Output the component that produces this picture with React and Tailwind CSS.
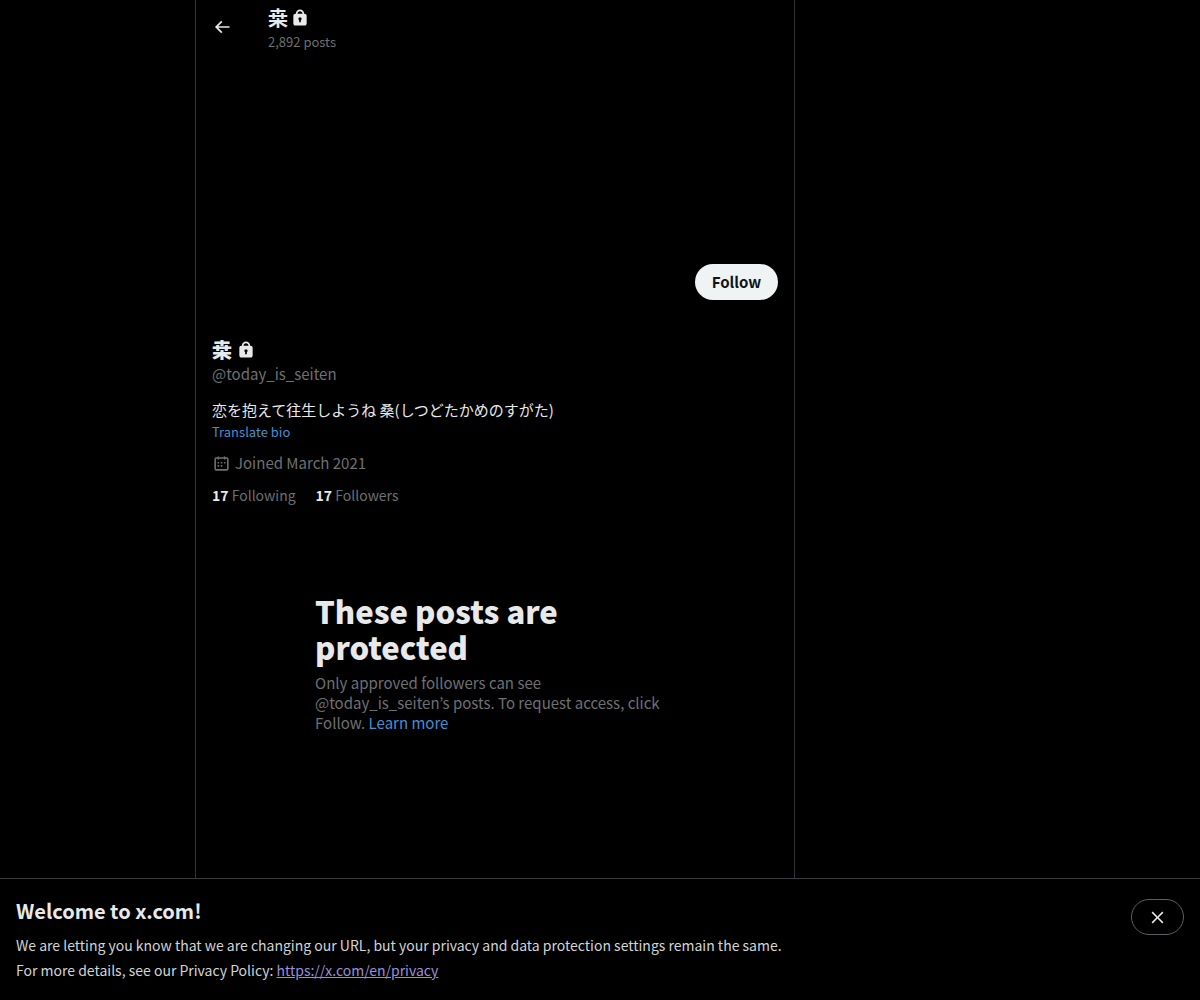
const lockPath =
  'M17.5 7H17v-.25c0-2.76-2.24-5-5-5s-5 2.24-5 5V7h-.5C5.12 7 4 8.12 4 9.5v9C4 19.88 5.12 21 6.5 21h11c1.38 0 2.5-1.12 2.5-2.5v-9C20 8.12 18.88 7 17.5 7zM13 14.73V17h-2v-2.27c-.59-.34-1-.99-1-1.73 0-1.1.9-2 2-2 1.11 0 2 .9 2 2 0 .74-.4 1.39-1 1.73zM15 7H9v-.25c0-1.66 1.35-3 3-3 1.66 0 3 1.34 3 3V7z';
const backPath =
  'M7.414 13l5.043 5.04-1.414 1.42L3.586 12l7.457-7.46 1.414 1.42L7.414 11H21v2H7.414z';
const calendarPath =
  'M7 4V3h2v1h6V3h2v1h1.5C19.89 4 21 5.12 21 6.5v12c0 1.38-1.11 2.5-2.5 2.5h-13C4.12 21 3 19.88 3 18.5v-12C3 5.12 4.12 4 5.5 4H7zm0 2H5.5c-.27 0-.5.22-.5.5v12c0 .28.23.5.5.5h13c.28 0 .5-.22.5-.5v-12c0-.28-.22-.5-.5-.5H17v1h-2V6H9v1H7V6zm0 6h2v-2H7v2zm0 4h2v-2H7v2zm4-4h2v-2h-2v2zm0 4h2v-2h-2v2zm4-4h2v-2h-2v2z';
const closePath =
  'M10.59 12L4.54 5.96l1.42-1.42L12 10.59l6.04-6.05 1.42 1.42L13.41 12l6.05 6.04-1.42 1.42L12 13.41l-6.04 6.05-1.42-1.42L10.59 12z';

function Icon({ path, className, label }) {
  return (
    <svg
      viewBox="0 0 24 24"
      fill="currentColor"
      className={className}
      role={label ? 'img' : undefined}
      aria-label={label}
      aria-hidden={label ? undefined : true}
    >
      <path d={path} />
    </svg>
  );
}

function TopBar() {
  return (
    <header className="flex h-[53px] items-center px-4">
      <div className="w-14">
        <button type="button" aria-label="Back" className="block">
          <Icon path={backPath} className="size-5" />
        </button>
      </div>
      <div className="pt-1.5">
        <h2 lang="ja" className="flex items-center gap-0.5 text-xl leading-6 font-bold">
          桒
          <Icon path={lockPath} className="size-5" label="Protected account" />
        </h2>
        <p className="text-[13px] leading-6 text-[#6e7072]">2,892 posts</p>
      </div>
    </header>
  );
}

function Profile() {
  return (
    <section className="px-4 pt-3">
      <div className="flex h-[74px] items-start justify-end">
        <button
          type="button"
          className="h-9 min-w-[83px] rounded-full bg-[#eff3f4] px-4 text-[15px] font-bold text-[#0f1419]"
        >
          Follow
        </button>
      </div>
      <h1 lang="ja" className="flex items-center gap-1 text-xl leading-6 font-extrabold">
        桒
        <Icon path={lockPath} className="size-5" label="Protected account" />
      </h1>
      <p className="text-[15px] leading-6 text-[#6e7072]">@today_is_seiten</p>
      <p className="mt-3 text-[15px] leading-6" lang="ja">
        恋を抱えて往生しようね 桑(しつどたかめのすがた)
      </p>
      <button type="button" className="block text-[13px] leading-5 text-[#4590d5]">
        Translate bio
      </button>
      <p className="mt-[11px] flex items-center gap-1 text-[15px] leading-5 text-[#6e7072]">
        <Icon path={calendarPath} className="size-[19px]" />
        Joined March 2021
      </p>
      <div className="mt-3 flex gap-5 text-sm leading-5 text-[#6e7072]">
        <a href="#following">
          <span className="font-bold text-[#e7e9ea]">17</span> Following
        </a>
        <a href="#followers">
          <span className="font-bold text-[#e7e9ea]">17</span> Followers
        </a>
      </div>
    </section>
  );
}

function ProtectedNotice() {
  return (
    <section className="mx-auto mt-22 mb-8 w-full max-w-[360px]">
      <h2 className="text-[31px] leading-9 font-extrabold">These posts are protected</h2>
      <p className="mt-2 text-[15px] leading-5 text-[#6e7072]">
        Only approved followers can see @today_is_seiten’s posts. To request access, click Follow.{' '}
        <a href="#learn-more" className="text-[#4590d5]">
          Learn more
        </a>
      </p>
    </section>
  );
}

function WelcomeBanner() {
  return (
    <aside className="sticky bottom-0 flex items-start justify-between gap-4 border-t border-[#3a3d40] bg-black px-4 pt-5 pb-[17px]">
      <div>
        <h2 className="text-xl leading-6 font-bold">Welcome to x.com!</h2>
        <p className="mt-2.5 text-sm leading-[25px] text-[#d2d4d5]">
          We are letting you know that we are changing our URL, but your privacy and data protection
          settings remain the same.
          <br />
          For more details, see our Privacy Policy:{' '}
          <a href="https://x.com/en/privacy" className="text-[#9a8fd8] underline">
            https://x.com/en/privacy
          </a>
        </p>
      </div>
      <button
        type="button"
        aria-label="Close"
        className="flex h-9 shrink-0 items-center rounded-full border border-[#5a6065] px-4"
      >
        <Icon path={closePath} className="size-[19px]" />
      </button>
    </aside>
  );
}

export default function App() {
  return (
    <div className="flex min-h-screen flex-col bg-black font-['Noto_Sans_CJK_JP',sans-serif] text-[#e7e9ea]">
      <div className="flex grow justify-center lg:pr-[210px]">
        <main className="w-full max-w-[600px] border-x border-[#2f3336]">
          <TopBar />
          <div className="h-[199px]" />
          <Profile />
          <ProtectedNotice />
        </main>
      </div>
      <WelcomeBanner />
    </div>
  );
}
